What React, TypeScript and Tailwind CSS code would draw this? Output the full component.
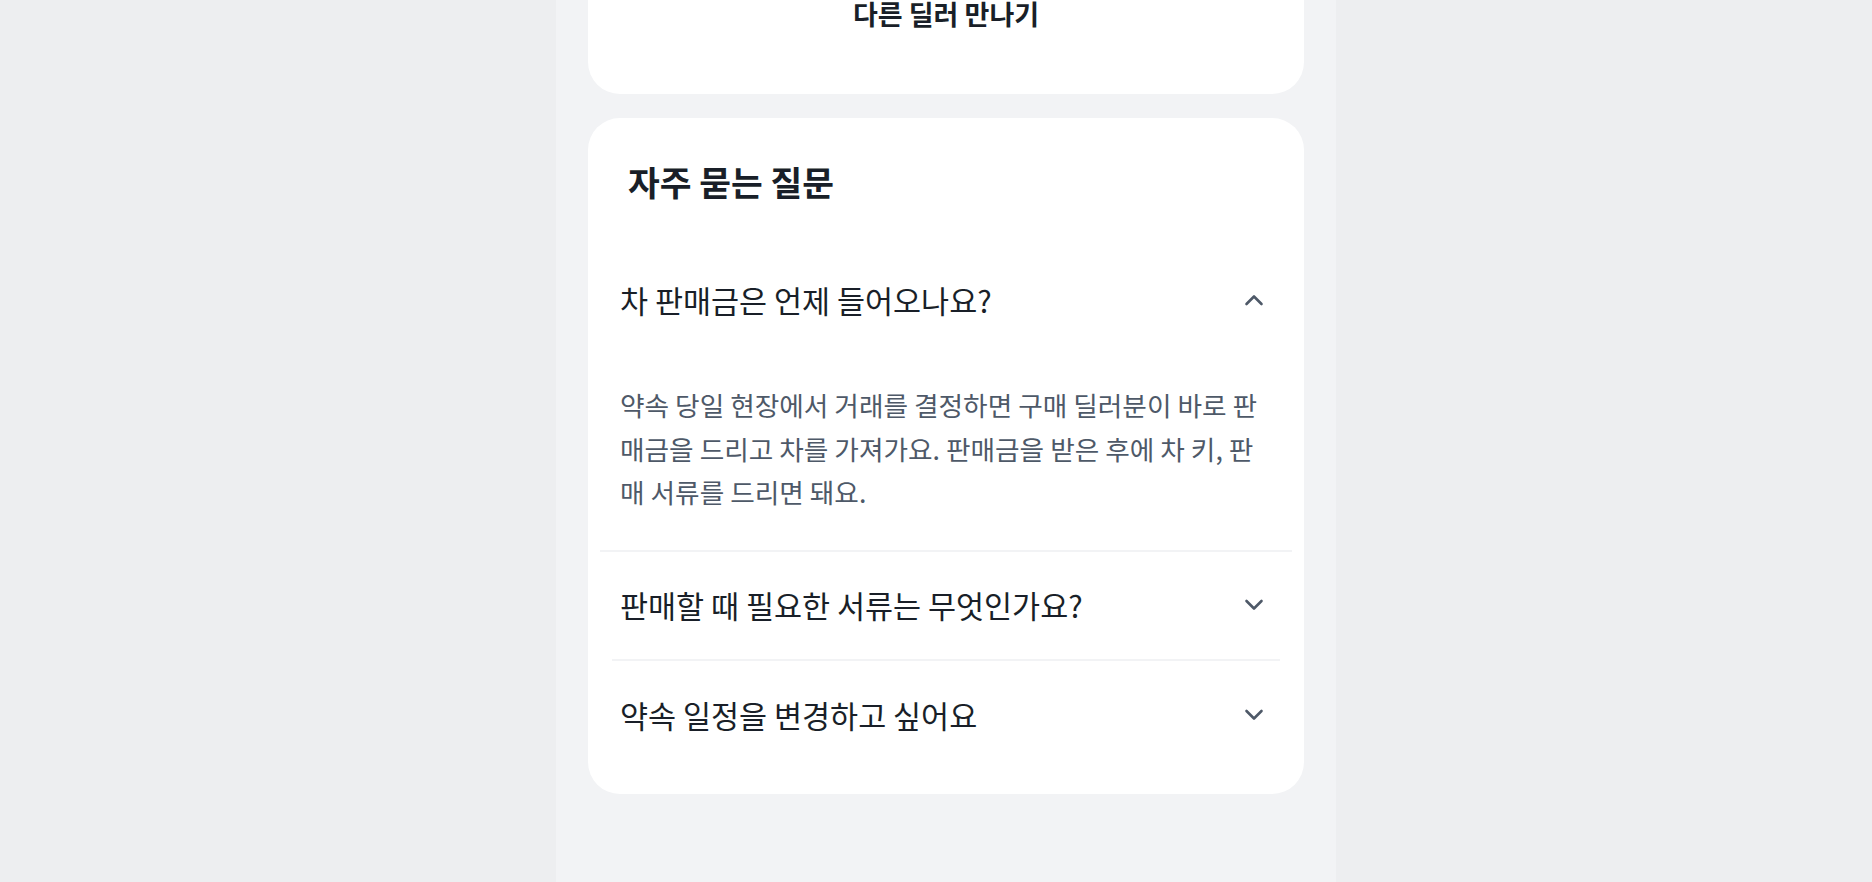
import { useState } from "react";

interface FaqItem {
  id: string;
  question: string;
  answer: string[];
}

const FAQ_ITEMS: FaqItem[] = [
  {
    id: "payment",
    question: "차 판매금은 언제 들어오나요?",
    answer: [
      "약속 당일 현장에서 거래를 결정하면 구매 딜러분이 바로 판",
      "매금을 드리고 차를 가져가요. 판매금을 받은 후에 차 키, 판",
      "매 서류를 드리면 돼요.",
    ],
  },
  {
    id: "documents",
    question: "판매할 때 필요한 서류는 무엇인가요?",
    answer: ["자동차 등록증과 신분증을 준비해 주세요."],
  },
  {
    id: "schedule",
    question: "약속 일정을 변경하고 싶어요",
    answer: ["딜러분과의 채팅에서 일정을 다시 조율할 수 있어요."],
  },
];

function Chevron({ up }: { up: boolean }) {
  return (
    <svg width="20" height="12" viewBox="0 0 20 12" fill="none" aria-hidden="true">
      <path
        d={up ? "M2.5 10 L10 2.5 L17.5 10" : "M2.5 2 L10 9.5 L17.5 2"}
        stroke="#4e5968"
        strokeWidth="2.6"
        strokeLinecap="round"
        strokeLinejoin="round"
      />
    </svg>
  );
}

export default function App() {
  const [openId, setOpenId] = useState<string | null>("payment");

  return (
    <div className="min-h-screen bg-[#edeef0] font-['Noto_Sans_CJK_KR','Noto_Sans',sans-serif]">
      <div className="ml-[556px] min-h-[882px] w-[780px] bg-[#f2f3f5] px-[32px]">
        {/* Dealer card (scrolled, only the bottom shows) */}
        <div className="rounded-b-[32px] bg-white pb-[66px]">
          <button className="block w-full text-center text-[27px] font-bold leading-[28px] text-[#191f28]">
            다른 딜러 만나기
          </button>
        </div>

        {/* FAQ */}
        <section className="mt-[24px] rounded-[32px] bg-white pb-[25px]">
          <h2 className="px-[40px] py-[41px] text-[34.5px] font-bold leading-[45px] text-[#191f28]">
            자주 묻는 질문
          </h2>

          {FAQ_ITEMS.map((item, i) => {
            const isOpen = openId === item.id;
            const rowHeight = i === 0 ? "h-[110px]" : i === 1 ? "h-[107px]" : "h-[108px]";
            return (
              <div key={item.id}>
                {i > 0 && (
                  <div className={i === 1 ? "mx-[12px] h-[2px] bg-[#f2f3f5]" : "mx-[24px] h-[2px] bg-[#f2f3f5]"} />
                )}
                <button
                  onClick={() => setOpenId(isOpen ? null : item.id)}
                  className={`flex w-full items-center justify-between px-[32px] text-left ${rowHeight}`}
                >
                  <span className="text-[30.5px] leading-[42px] text-[#191f28]">{item.question}</span>
                  <span className="flex h-[36px] w-[36px] items-center justify-center">
                    <Chevron up={isOpen} />
                  </span>
                </button>
                {isOpen && (
                  <p className="px-[32px] pb-[36px] pt-[28px] text-[26.7px] leading-[43.5px] text-[#4e5968]">
                    {item.answer.map((line, j) => (
                      <span key={j} className="block whitespace-nowrap">
                        {line}
                      </span>
                    ))}
                  </p>
                )}
              </div>
            );
          })}
        </section>
      </div>
    </div>
  );
}
